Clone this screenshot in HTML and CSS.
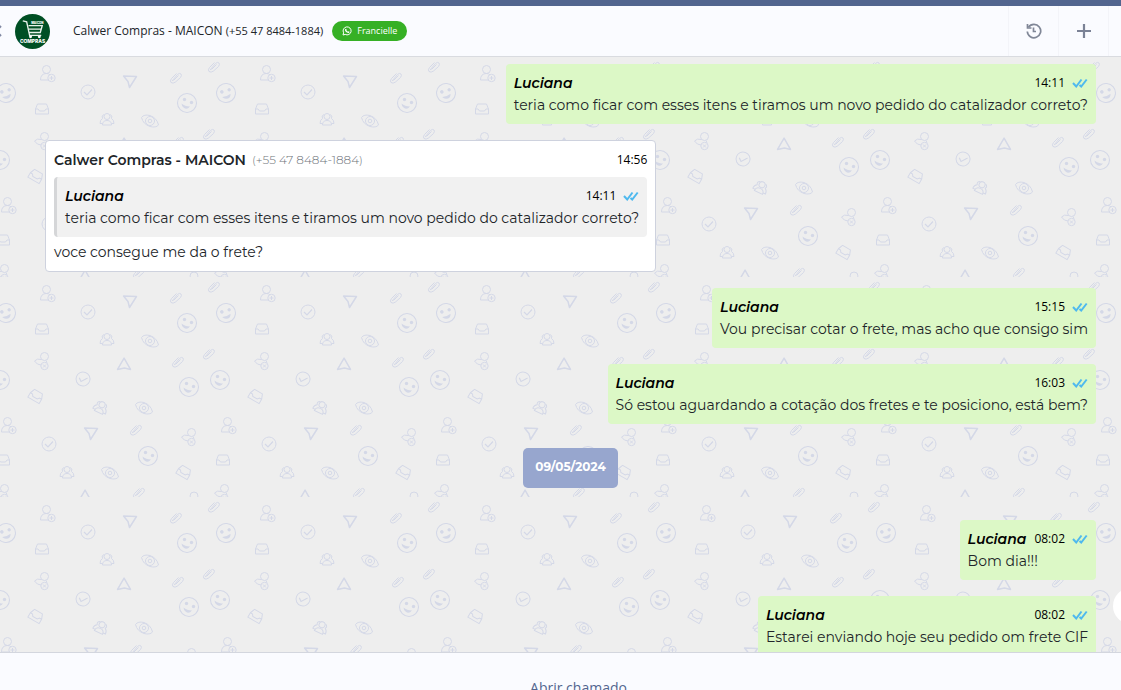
FILE: index.html
```html
<!DOCTYPE html>
<html lang="pt-BR">
<head>
    <meta charset="UTF-8">
    <meta name="viewport" content="width=device-width, initial-scale=1.0">
    <title>Calwer Compras - MAICON</title>
    <link rel="stylesheet" href="styles.css">
</head>
<body>
    <!-- Shared icons -->
    <svg class="sprite" aria-hidden="true">
        <symbol id="ticks" viewBox="0 0 16 10">
            <path d="M1 5 L4.200 8.500 L9.500 1.500 M7.500 7 L9.200 8.500 L14.700 1.500" fill="none" stroke="#4fb9ee" stroke-width="2"/>
        </symbol>
        <g id="smile">
            <circle r="9.5" stroke-width="1.1"/>
            <circle cx="-2.5" cy="-3.5" r="1.7" class="solid"/>
            <circle cx="4.5" cy="-.5" r="1.7" class="solid"/>
            <path d="M-5.5 .5 Q-2 3.5 3 3.5 Q0 7.500 -3.500 4.500 Q-5.500 3 -5.500 .5Z" class="solid"/>
        </g>
        <g id="check">
            <circle r="7"/>
            <path d="M-4 0 L-1 3 L4 -2.500" stroke-width="1.2"/>
        </g>
        <g id="send">
            <path d="M-6.500 -5 L6.500 -4.500 L-.5 6.500 L-2 .5Z" stroke-width="1.500" stroke-linejoin="round"/>
        </g>
        <g id="clip">
            <path d="M-4 3 L1.500 -3.500 Q3.500 -5.500 5 -4 Q6 -2.500 4.500 -.5 L-.5 4 Q-3 6 -5 4.500 Q-6.500 3 -4.500 .5 L.5 -4.500 M-2.500 2.500 L2.500 -2.500"/>
        </g>
        <g id="inbox">
            <path d="M-6.500 0 L-4.500 -5 H4.500 L6.500 0 V5 H-6.500Z M-6.500 0 H-4 L-2.500 2 H2.500 L4 0 H6.500"/>
        </g>
        <g id="group">
            <circle cy="-2.500" r="3"/>
            <path d="M-4.500 6 Q-4.500 1.500 0 1.500 Q4.500 1.500 4.500 6Z M-3 -4.500 Q-6 -3.500 -4.500 -.5 Q-7 1 -7 4.500 H-4.500 M3 -4.500 Q6 -3.500 4.500 -.5 Q7 1 7 4.500 H4.500"/>
        </g>
        <g id="eye">
            <path d="M-8.500 -3.500 Q-6 -7 0 -5.500 Q7 -3 8.500 4 Q6 7 0 5.500 Q-7 3 -8.500 -3.500Z"/>
            <circle r="4.500"/>
            <circle r="1.800"/>
        </g>
        <g id="user-add">
            <circle cx="-1.500" cy="-4.500" r="4"/>
            <path d="M1 6 H-7.500 Q-7.500 -.5 -1.500 -.5 Q1 -.5 2 1"/>
            <circle cx="3.500" cy="4" r="3.700"/>
            <path d="M3.500 2 V6 M1.500 4 H5.500"/>
        </g>
        <g id="user-off">
            <circle cx="2.500" cy="-4.500" r="4"/>
            <path d="M-.5 -1.500 Q-5 -3 -7.500 0 Q-5 4 -1 4 M4 -.5 L5 2"/>
            <circle cx="2.500" cy="5" r="3.700"/>
            <path d="M1 3.500 L4 6.500 M4 3.500 L1 6.500"/>
        </g>
    </svg>

    <header class="topbar">
        <a href="#" class="back" aria-label="Voltar">
            <svg width="8" height="12" viewBox="0 0 8 12"><path d="M7 1 L2 6 L7 11" fill="none" stroke="#8088a3" stroke-width="2"/></svg>
        </a>
        <svg class="avatar" viewBox="0 0 36 36" role="img" aria-label="Maicon Compras">
            <circle cx="18" cy="18" r="18" fill="#004f24"/>
            <path d="M8 7 L12 8 L15 22 H27 M14 12 H28 L26 19 H15 M14 15.500 H27" fill="none" stroke="#e9f3ec" stroke-width="1.400"/>
            <circle cx="16" cy="23.500" r="1.500" fill="#fff"/>
            <circle cx="25" cy="23.500" r="1.500" fill="#fff"/>
            <text x="23" y="10" class="logo-top">MAICON</text>
            <text x="18" y="30" class="logo-name">COMPRAS</text>
        </svg>
        <h1 class="contact">Calwer Compras - MAICON <span>(+55 47 8484-1884)</span></h1>
        <span class="badge">
            <svg width="10" height="10" viewBox="0 0 10 10" fill="none" stroke="#fff"><path d="M1 9 L1.600 6.800 A4 4 0 1 1 3.200 8.400Z"/><path d="M3.500 3.200 Q3.500 5.800 6.600 6.500 L7 5.500 M3.500 3.200 L4.300 4.400" stroke-width="1.200"/></svg>
            Francielle
        </span>
        <div class="actions">
            <button type="button" aria-label="Histórico">
                <svg width="16" height="16" viewBox="0 0 16 16" fill="none" stroke="#808797" stroke-width="1.700"><path d="M2.500 4.200 A6.700 6.700 0 1 1 1.300 8.500"/><path d="M1.500 1 V5 H5.500 M7.500 4.500 V8.500 H10"/></svg>
            </button>
            <button type="button" aria-label="Adicionar">
                <svg width="16" height="16" viewBox="0 0 16 16" stroke="#7b8296" stroke-width="2.200"><path d="M8 1 V15 M1 8 H15"/></svg>
            </button>
        </div>
    </header>

    <main class="chat">
        <svg class="wallpaper" aria-hidden="true">
            <defs>
                <pattern id="doodles" width="220" height="220" patternUnits="userSpaceOnUse">
                    <g fill="none" stroke="#d4d8e7" stroke-width="1">
                        <use href="#user-add" x="48" y="17"/>
                        <use href="#check" x="88" y="35"/>
                        <use href="#send" x="130" y="24"/>
                        <use href="#clip" x="176" y="21"/>
                        <use href="#clip" x="214" y="10"/>
                        <use href="#smile" x="187" y="46"/>
                        <use href="#smile" transform="translate(226 36) rotate(-40)"/>
                        <use href="#smile" transform="translate(6 36) rotate(-40)"/>
                        <use href="#inbox" x="42" y="52"/>
                        <use href="#group" x="107" y="62"/>
                        <use href="#eye" x="150" y="64"/>
                        <use href="#user-off" x="42" y="84"/>
                        <use href="#send" transform="translate(125 89) rotate(-62)"/>
                        <use href="#check" transform="translate(83 102) rotate(20)"/>
                        <use href="#clip" x="178" y="85"/>
                        <use href="#clip" x="209" y="77"/>
                        <use href="#smile" x="189" y="110"/>
                        <use href="#smile" x="220" y="103"/>
                        <use href="#smile" x="0" y="103"/>
                        <use href="#inbox" transform="translate(36 119) rotate(30)"/>
                        <use href="#group" transform="translate(101 130) rotate(25)"/>
                        <use href="#eye" x="144" y="131"/>
                        <use href="#user-add" x="9" y="149"/>
                        <use href="#send" x="91" y="156"/>
                        <use href="#clip" x="136" y="153"/>
                        <use href="#user-off" x="189" y="160"/>
                        <use href="#check" x="49" y="167"/>
                        <use href="#smile" x="148" y="179"/>
                        <use href="#inbox" x="223" y="183"/>
                        <use href="#inbox" x="3" y="183"/>
                        <use href="#group" x="67" y="195"/>
                        <use href="#eye" x="110" y="196"/>
                        <use href="#inbox" transform="translate(184 195) rotate(30)"/>
                        <use href="#user-off" x="2" y="216"/>
                        <use href="#user-off" x="222" y="216"/>
                        <use href="#send" transform="translate(86 221) rotate(-62)"/>
                        <use href="#clip" x="139" y="216"/>
                        <circle cx="194" cy="219" r="4"/>
                    </g>
                </pattern>
            </defs>
            <rect width="100%" height="100%" fill="url(#doodles)"/>
        </svg>

        <div class="messages">
            <article class="bubble sent">
                <div class="meta"><em>Luciana</em><time>14:11</time><svg class="ticks"><use href="#ticks"/></svg></div>
                <p>teria como ficar com esses itens e tiramos um novo pedido do catalizador correto?</p>
            </article>

            <article class="bubble received">
                <div class="meta"><strong>Calwer Compras - MAICON</strong><span class="phone">(+55 47 8484-1884)</span><time>14:56</time></div>
                <blockquote class="quote">
                    <div class="meta"><em>Luciana</em><time>14:11</time><svg class="ticks"><use href="#ticks"/></svg></div>
                    <p>teria como ficar com esses itens e tiramos um novo pedido do catalizador correto?</p>
                </blockquote>
                <p>voce consegue me da o frete?</p>
            </article>

            <article class="bubble sent">
                <div class="meta"><em>Luciana</em><time>15:15</time><svg class="ticks"><use href="#ticks"/></svg></div>
                <p>Vou precisar cotar o frete, mas acho que consigo sim</p>
            </article>

            <article class="bubble sent">
                <div class="meta"><em>Luciana</em><time>16:03</time><svg class="ticks"><use href="#ticks"/></svg></div>
                <p>Só estou aguardando a cotação dos fretes e te posiciono, está bem?</p>
            </article>

            <div class="date">09/05/2024</div>

            <article class="bubble sent">
                <div class="meta"><em>Luciana</em><time>08:02</time><svg class="ticks"><use href="#ticks"/></svg></div>
                <p>Bom dia!!!</p>
            </article>

            <article class="bubble sent">
                <div class="meta"><em>Luciana</em><time>08:02</time><svg class="ticks"><use href="#ticks"/></svg></div>
                <p>Estarei enviando hoje seu pedido om frete CIF</p>
            </article>
        </div>

        <button type="button" class="scroll-down" aria-label="Ir para o fim"></button>
    </main>

    <footer class="footer">
        <button type="button">Abrir chamado</button>
    </footer>
</body>
</html>
```
FILE: styles.css
```css
* {
    box-sizing: border-box;
}

body {
    display: flex;
    flex-direction: column;
    height: 100vh;
    margin: 0;
    overflow: hidden;
    background-color: #fafbff;
    color: #212529;
    font-family: 'Montserrat', 'Inter', sans-serif;
    font-size: 14px;
    line-height: 22px;
}

p, h1, blockquote {
    margin: 0;
}

button {
    padding: 0;
    border: none;
    background: none;
    cursor: pointer;
}

.sprite {
    position: absolute;
    width: 0;
    height: 0;
}

.solid {
    fill: #d4d8e7;
    stroke: none;
}

/* Header */
.topbar {
    display: flex;
    align-items: center;
    flex: none;
    height: 57px;
    border-top: 6px solid #52658f;
    border-bottom: 1px solid #d9dbe0;
    font-family: 'Open Sans', sans-serif;
}

.back {
    display: flex;
    width: 15px;
    margin-left: -6px;
    margin-right: 6px;
}

.avatar {
    width: 35px;
    height: 35px;
}

.logo-top,
.logo-name {
    fill: #fff;
    font-family: 'Inter', sans-serif;
    font-weight: 800;
    text-anchor: middle;
}

.logo-top {
    font-size: 3px;
}

.logo-name {
    font-size: 5px;
}

.contact {
    margin-left: 23px;
    font-size: 12px;
    font-weight: 500;
    line-height: 20px;
    white-space: nowrap;
}

.contact span {
    font-size: 11px;
    font-weight: 400;
}

.badge {
    display: flex;
    align-items: center;
    gap: 5px;
    height: 20px;
    margin-left: 9px;
    padding: 0 10px;
    border-radius: 10px;
    background-color: #36b025;
    color: #fff;
    font-size: 9px;
    font-weight: 500;
}

.actions {
    display: flex;
    align-self: stretch;
    margin-left: auto;
    margin-right: 12px;
    border-right: 1px solid #f3f4f9;
}

.actions button {
    display: flex;
    align-items: center;
    justify-content: center;
    width: 50px;
    border-left: 1px solid #f3f4f9;
}

/* Conversation */
.chat {
    position: relative;
    flex: 1;
    min-height: 0;
    overflow: hidden;
    background-color: #eee;
}

.wallpaper {
    position: absolute;
    inset: 0;
    width: 100%;
    height: 100%;
}

.messages {
    position: relative;
    display: flex;
    flex-direction: column;
    gap: 16px;
    padding: 7px 25px 16px 45px;
}

.bubble {
    max-width: 90%;
    padding: 8px;
    border-radius: 4px;
}

.sent {
    align-self: flex-end;
    background-color: #dcf8c6;
}

.received {
    align-self: flex-start;
    border: 1px solid #ced2de;
    background-color: #fff;
}

.meta {
    display: flex;
    align-items: center;
    height: 22px;
}

.meta em,
.meta strong {
    color: #000;
    font-weight: 600;
}

.meta strong {
    color: #212529;
}

.phone {
    margin-left: 6px;
    color: #70757b;
    font-size: 12px;
    font-weight: 300;
}

.meta time {
    margin-left: auto;
    padding-left: 8px;
    color: #000;
    font-family: 'Open Sans', sans-serif;
    font-size: 12px;
}

.ticks {
    width: 16px;
    height: 10px;
    margin-left: 7px;
}

.quote {
    margin: 6px 0 4px;
    padding: 8px;
    border-left: 3px solid #d5d6d8;
    border-radius: 4px;
    background-color: #f1f1f1;
}

.date {
    align-self: center;
    margin: 8px 0 16px;
    padding: 8px 12px 10px;
    border-radius: 5px;
    background-color: #97a6ce;
    color: #fff;
    font-size: 12px;
    font-weight: 700;
}

.scroll-down {
    position: absolute;
    right: -28px;
    bottom: 28px;
    width: 36px;
    height: 36px;
    border-radius: 50%;
    background-color: #fff;
}

/* Footer */
.footer {
    flex: none;
    height: 38px;
    padding: 24px 0 0 36px;
    overflow: hidden;
    border-top: 1px solid #d3d6de;
    text-align: center;
}

.footer button {
    color: #52658f;
    font-family: 'Open Sans', sans-serif;
    font-size: 14px;
    line-height: 22px;
}
```
